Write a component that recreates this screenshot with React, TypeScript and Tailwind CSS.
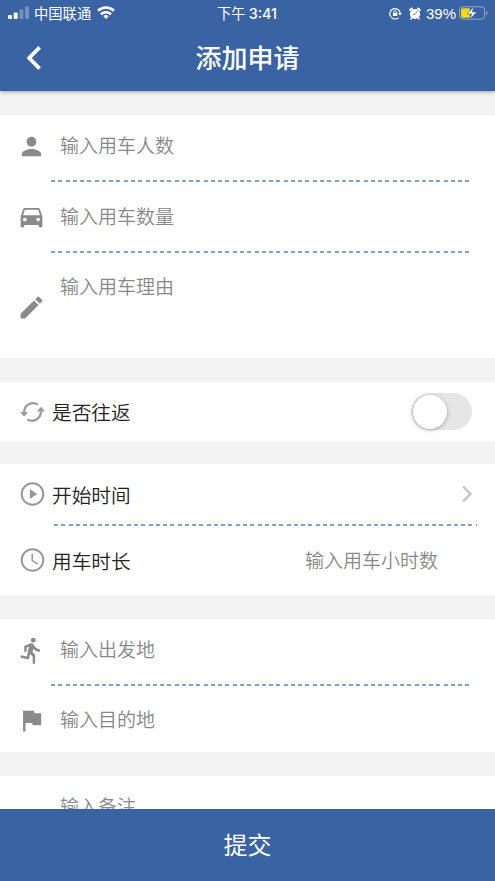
import React, { useState } from "react";
import { MdPerson, MdDirectionsCar, MdEdit, MdDirectionsRun, MdFlag } from "react-icons/md";

function SignalIcon() {
    return (
        <svg width="22" height="14" viewBox="0 0 22 14" fill="#fff">
            <rect x="0" y="9" width="4" height="4" rx="1" />
            <rect x="5.7" y="6.5" width="4" height="6.5" rx="1" />
            <rect x="11.4" y="3.5" width="4" height="9.5" rx="1" opacity="0.3" />
            <rect x="17.1" y="0.5" width="4" height="12.5" rx="1" opacity="0.3" />
        </svg>
    );
}

function WifiIcon() {
    return (
        <svg width="18" height="14" viewBox="0 0 18 14" fill="none" stroke="#fff" strokeWidth="2.6">
            <path d="M1 4.8a11.5 11.5 0 0 1 16 0" />
            <path d="M4 8.2a7.2 7.2 0 0 1 10 0" />
            <path d="M9 13l-2.6-2.7a3.8 3.8 0 0 1 5.2 0z" fill="#fff" stroke="none" />
        </svg>
    );
}

function RotationLockIcon() {
    return (
        <svg width="13" height="13" viewBox="0 0 13 13" fill="none" stroke="#fff" strokeWidth="1.2">
            <path d="M9.6 10.6A5.2 5.2 0 1 1 11.2 6.2" />
            <path d="M9 6h4l-2 2.6z" fill="#fff" stroke="none" />
            <rect x="3.9" y="5.9" width="4.4" height="3.2" rx="0.4" fill="#fff" stroke="none" />
            <path d="M4.9 6V4.9a1.2 1.2 0 0 1 2.4 0V6" strokeWidth="0.9" />
        </svg>
    );
}

function AlarmIcon() {
    return (
        <svg width="12" height="13" viewBox="0 0 12 13" fill="none">
            <circle cx="6" cy="7" r="5.1" fill="#fff" />
            <path d="M1.2 3L2.8 1.6M10.8 3L9.2 1.6" stroke="#fff" strokeWidth="2.2" strokeLinecap="round" />
            <path d="M2.6 11l-0.8 1M9.4 11l0.8 1" stroke="#fff" strokeWidth="1.4" strokeLinecap="round" />
            <path d="M8.4 4.6L6 7.3H3.9" stroke="#3a63a3" strokeWidth="0.8" />
        </svg>
    );
}

function BatteryIcon() {
    return (
        <svg width="29" height="14" viewBox="0 0 29 14">
            <rect x="0.5" y="0.8" width="25.2" height="12.4" rx="3.4" fill="none" stroke="#fff" strokeOpacity="0.45" />
            <path d="M27.2 4.9a2.4 2.4 0 0 1 0 4.2z" fill="#fff" fillOpacity="0.45" />
            <path d="M3.8 2.3H10.8V11.7H3.8A1.8 1.8 0 0 1 2 9.9V4.1A1.8 1.8 0 0 1 3.8 2.3z" fill="#fbd90d" />
            <path d="M14.6 0.8L8.3 7.9h4.3L10.8 13.4 17.6 5.9h-4.3z" fill="#fff" stroke="#3a63a3" strokeWidth="0.6" />
        </svg>
    );
}

function CycleIcon() {
    return (
        <svg width="26" height="22" viewBox="0 0 26 22" fill="none" stroke="#989898" strokeWidth="2.2">
            <path d="M4.2 11.5A8.8 8.8 0 0 1 17.8 3.6" />
            <path d="M20.8 10.5A8.8 8.8 0 0 1 7.4 18.4" />
            <path d="M0.1 10.9h8L4.1 15.5z" fill="#989898" stroke="none" />
            <path d="M16.9 10.4h8L20.9 5.8z" fill="#989898" stroke="none" />
        </svg>
    );
}

function PlayIcon() {
    return (
        <svg width="25" height="24" viewBox="0 0 25 24" fill="none">
            <circle cx="12.5" cy="12" r="10.8" stroke="#989898" strokeWidth="2" />
            <path d="M9.9 6.9L17.1 12 9.9 17.1z" fill="#989898" />
        </svg>
    );
}

function ClockIcon() {
    return (
        <svg width="25" height="24" viewBox="0 0 25 24" fill="none" stroke="#989898">
            <circle cx="12.5" cy="12" r="10.8" strokeWidth="2" />
            <path d="M12.2 6V12.4L17.7 16.2" strokeWidth="1.5" />
        </svg>
    );
}

function Divider() {
    return <div className="h-[2px] shrink-0 bg-[repeating-linear-gradient(to_right,#7da3cb_0_4px,transparent_4px_7.27px)]" />;
}

type FieldProps = {
    icon?: React.ReactNode;
    text: string;
    className?: string;
};

function Field({ icon, text, className = "" }: FieldProps) {
    return (
        <div className={`flex items-center pl-[17px] text-[19px] leading-7 text-[#888] ${className}`}>
            <span className="w-[43px] text-[29px] text-[#8a8a8a]">{icon}</span>
            <span className="pb-[2px]">{text}</span>
        </div>
    );
}

export default function App() {
    const [roundTrip, setRoundTrip] = useState(false);

    return (
        <div className="flex h-[881px] w-full flex-col overflow-hidden bg-[#f3f3f3] font-['Noto_Sans_CJK_SC',sans-serif] font-[350]">
            <header className="z-10 h-[91px] shrink-0 bg-[#3a63a3] text-white shadow-[0_1px_4px_rgba(0,0,0,0.35)]">
                <div className="grid h-[26px] grid-cols-3 items-center pl-2 pr-[7px] text-[14.3px] leading-none font-normal">
                    <div className="flex items-center">
                        <SignalIcon />
                        <span className="ml-1 mr-[6px]">中国联通</span>
                        <WifiIcon />
                    </div>
                    <div className="pr-[2px] pt-px text-center">
                        下午 <span className="font-['Inter',sans-serif] font-medium">3:41</span>
                    </div>
                    <div className="flex items-center justify-end">
                        <RotationLockIcon />
                        <span className="ml-[7px] mr-[5px]"><AlarmIcon /></span>
                        <span className="mr-[3px] font-['Liberation_Sans',sans-serif] text-[15px]">39%</span>
                        <BatteryIcon />
                    </div>
                </div>
                <div className="grid h-[64px] grid-cols-[56px_1fr_56px] items-center">
                    <button className="pl-[26px]">
                        <svg width="16" height="24" viewBox="0 0 16 24" fill="none" stroke="#fff" strokeWidth="3.8">
                            <path d="M13.6 1.4L3.2 12 13.6 22.6" />
                        </svg>
                    </button>
                    <h1 className="pb-[2px] text-center text-[26px] leading-none font-medium">添加申请</h1>
                </div>
            </header>

            <main className="flex min-h-0 flex-1 flex-col gap-6 overflow-hidden pt-6">
                <section className="h-[243px] shrink-0 bg-white">
                    <Field icon={<MdPerson />} text="输入用车人数" className="h-[65px] pb-[3px]" />
                    <div className="pl-[51px] pr-[26px]"><Divider /></div>
                    <Field icon={<MdDirectionsCar />} text="输入用车数量" className="h-[69px]" />
                    <div className="pl-[51px] pr-[26px]"><Divider /></div>
                    <div className="flex h-[105px] items-center pl-[17px] text-[19px] leading-7 text-[#888]">
                        <MdEdit className="mt-1 mr-[14px] text-[29px] text-[#8a8a8a]" />
                        <span className="self-start pt-[19px]">输入用车理由</span>
                    </div>
                </section>

                <section className="flex h-[59px] shrink-0 items-center bg-white pl-5 pr-[23px]">
                    <CycleIcon />
                    <span className="ml-[6px] flex-1 pt-px text-[19.7px] leading-7 text-[#222]">是否往返</span>
                    <button
                        role="switch"
                        aria-checked={roundTrip}
                        onClick={() => setRoundTrip(!roundTrip)}
                        className={`flex h-[37px] w-[61px] items-center rounded-full p-[1.5px] ${roundTrip ? "justify-end bg-[#3a63a3]" : "bg-[#e6e6e6]"}`}
                    >
                        <span className="size-[34px] rounded-full bg-white shadow-[0_1px_4px_rgba(0,0,0,0.3)]" />
                    </button>
                </section>

                <section className="-mt-px h-[131px] shrink-0 bg-white">
                    <div className="flex h-[60px] items-center pl-5 pr-[22px]">
                        <PlayIcon />
                        <span className="ml-[7px] flex-1 pt-[2px] text-[19.7px] leading-7 text-[#222]">开始时间</span>
                        <svg width="12" height="18" viewBox="0 0 12 18" fill="none" stroke="#c4c4c4" strokeWidth="2.4">
                            <path d="M2 1.5L9.5 9 2 16.5" />
                        </svg>
                    </div>
                    <div className="pl-[54px] pr-[18px]"><Divider /></div>
                    <div className="flex h-[69px] items-center pl-5 pr-[57px] pb-px">
                        <ClockIcon />
                        <span className="ml-[7px] flex-1 pt-[2px] text-[19.7px] leading-7 text-[#222]">用车时长</span>
                        <span className="text-[19px] leading-7 text-[#888]">输入用车小时数</span>
                    </div>
                </section>

                <section className="h-[133px] shrink-0 bg-white">
                    <Field icon={<MdDirectionsRun />} text="输入出发地" className="h-[65px] pb-[3px]" />
                    <div className="pl-[51px] pr-[26px]"><Divider /></div>
                    <Field icon={<MdFlag />} text="输入目的地" className="h-[68px]" />
                </section>

                <section className="h-[133px] shrink-0 bg-white">
                    <Field text="输入备注" className="h-[61px]" />
                </section>
            </main>

            <footer className="h-[72px] shrink-0 bg-[#3a63a3]">
                <button className="h-full w-full pb-[2px] text-[24px] leading-none font-normal text-white">提交</button>
            </footer>
        </div>
    );
}
